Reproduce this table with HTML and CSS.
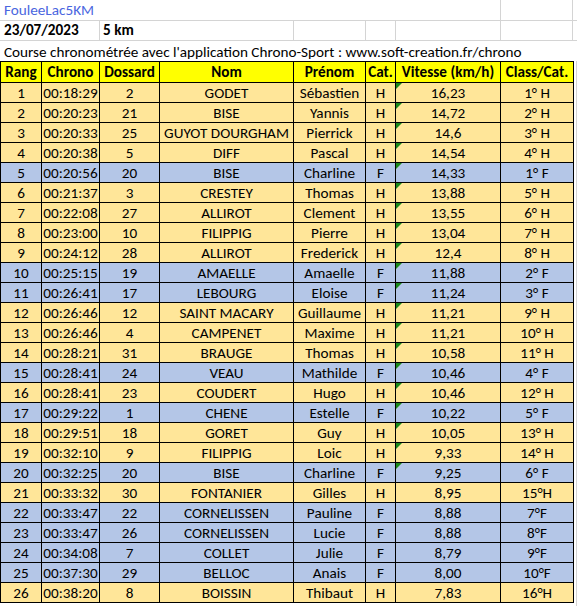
FILE: index.html
```html
<!DOCTYPE html>
<html lang="fr">
<head>
<meta charset="utf-8">
<title>FouleeLac5KM</title>
<link rel="stylesheet" href="styles.css">
</head>
<body>
<div class="sheet">
  <div class="line l1">
    <div class="cell w-a-f title">FouleeLac5KM</div>
    <div class="cell w-h"></div>
    <div class="cell rest"></div>
  </div>
  <div class="line l2">
    <div class="cell w-ab bold">23/07/2023</div>
    <div class="cell w-cd bold">5 km</div>
    <div class="cell w-e"></div>
    <div class="cell w-f"></div>
    <div class="cell w-g"></div>
    <div class="cell w-h"></div>
    <div class="cell rest"></div>
  </div>
  <div class="line l3">
    <div class="cell full">Course chronométrée avec l'application Chrono-Sport : www.soft-creation.fr/chrono</div>
  </div>
  <div class="tablewrap">
    <table class="results">
      <colgroup>
        <col class="c-rang"><col class="c-chrono"><col class="c-dos"><col class="c-nom"><col class="c-pre"><col class="c-cat"><col class="c-vit"><col class="c-cls">
      </colgroup>
      <thead>
        <tr><th>Rang</th><th>Chrono</th><th>Dossard</th><th>Nom</th><th>Prénom</th><th>Cat.</th><th>Vitesse (km/h)</th><th>Class/Cat.</th></tr>
      </thead>
      <tbody>
        <tr class="h"><td>1</td><td>00:18:29</td><td>2</td><td>GODET</td><td>Sébastien</td><td>H</td><td class="t">16,23</td><td>1° H</td></tr>
        <tr class="h"><td>2</td><td>00:20:23</td><td>21</td><td>BISE</td><td>Yannis</td><td>H</td><td class="t">14,72</td><td>2° H</td></tr>
        <tr class="h"><td>3</td><td>00:20:33</td><td>25</td><td>GUYOT DOURGHAM</td><td>Pierrick</td><td>H</td><td class="t">14,6</td><td>3° H</td></tr>
        <tr class="h"><td>4</td><td>00:20:38</td><td>5</td><td>DIFF</td><td>Pascal</td><td>H</td><td class="t">14,54</td><td>4° H</td></tr>
        <tr class="f"><td>5</td><td>00:20:56</td><td>20</td><td>BISE</td><td>Charline</td><td>F</td><td class="t">14,33</td><td>1° F</td></tr>
        <tr class="h"><td>6</td><td>00:21:37</td><td>3</td><td>CRESTEY</td><td>Thomas</td><td>H</td><td class="t">13,88</td><td>5° H</td></tr>
        <tr class="h"><td>7</td><td>00:22:08</td><td>27</td><td>ALLIROT</td><td>Clement</td><td>H</td><td class="t">13,55</td><td>6° H</td></tr>
        <tr class="h"><td>8</td><td>00:23:00</td><td>10</td><td>FILIPPIG</td><td>Pierre</td><td>H</td><td class="t">13,04</td><td>7° H</td></tr>
        <tr class="h"><td>9</td><td>00:24:12</td><td>28</td><td>ALLIROT</td><td>Frederick</td><td>H</td><td class="t">12,4</td><td>8° H</td></tr>
        <tr class="f"><td>10</td><td>00:25:15</td><td>19</td><td>AMAELLE</td><td>Amaelle</td><td>F</td><td class="t">11,88</td><td>2° F</td></tr>
        <tr class="f"><td>11</td><td>00:26:41</td><td>17</td><td>LEBOURG</td><td>Eloise</td><td>F</td><td class="t">11,24</td><td>3° F</td></tr>
        <tr class="h"><td>12</td><td>00:26:46</td><td>12</td><td>SAINT MACARY</td><td>Guillaume</td><td>H</td><td class="t">11,21</td><td>9° H</td></tr>
        <tr class="h"><td>13</td><td>00:26:46</td><td>4</td><td>CAMPENET</td><td>Maxime</td><td>H</td><td class="t">11,21</td><td>10° H</td></tr>
        <tr class="h"><td>14</td><td>00:28:21</td><td>31</td><td>BRAUGE</td><td>Thomas</td><td>H</td><td class="t">10,58</td><td>11° H</td></tr>
        <tr class="f"><td>15</td><td>00:28:41</td><td>24</td><td>VEAU</td><td>Mathilde</td><td>F</td><td class="t">10,46</td><td>4° F</td></tr>
        <tr class="h"><td>16</td><td>00:28:41</td><td>23</td><td>COUDERT</td><td>Hugo</td><td>H</td><td class="t">10,46</td><td>12° H</td></tr>
        <tr class="f"><td>17</td><td>00:29:22</td><td>1</td><td>CHENE</td><td>Estelle</td><td>F</td><td class="t">10,22</td><td>5° F</td></tr>
        <tr class="h"><td>18</td><td>00:29:51</td><td>18</td><td>GORET</td><td>Guy</td><td>H</td><td class="t">10,05</td><td>13° H</td></tr>
        <tr class="h"><td>19</td><td>00:32:10</td><td>9</td><td>FILIPPIG</td><td>Loic</td><td>H</td><td class="t">9,33</td><td>14° H</td></tr>
        <tr class="f"><td>20</td><td>00:32:25</td><td>20</td><td>BISE</td><td>Charline</td><td>F</td><td class="t">9,25</td><td>6° F</td></tr>
        <tr class="h"><td>21</td><td>00:33:32</td><td>30</td><td>FONTANIER</td><td>Gilles</td><td>H</td><td>8,95</td><td>15°H</td></tr>
        <tr class="f"><td>22</td><td>00:33:47</td><td>22</td><td>CORNELISSEN</td><td>Pauline</td><td>F</td><td>8,88</td><td>7°F</td></tr>
        <tr class="f"><td>23</td><td>00:33:47</td><td>26</td><td>CORNELISSEN</td><td>Lucie</td><td>F</td><td>8,88</td><td>8°F</td></tr>
        <tr class="f"><td>24</td><td>00:34:08</td><td>7</td><td>COLLET</td><td>Julie</td><td>F</td><td>8,79</td><td>9°F</td></tr>
        <tr class="f"><td>25</td><td>00:37:30</td><td>29</td><td>BELLOC</td><td>Anais</td><td>F</td><td>8,00</td><td>10°F</td></tr>
        <tr class="h"><td>26</td><td>00:38:20</td><td>8</td><td>BOISSIN</td><td>Thibaut</td><td>H</td><td>7,83</td><td>16°H</td></tr>
      </tbody>
    </table>
    <div class="filler"></div>
  </div>
</div>
</body>
</html>
```

FILE: styles.css
```css
html, body {
  margin: 0;
  padding: 0;
  background: #ffffff;
}

body {
  font-family: Carlito, Lato, "Liberation Sans", sans-serif;
  font-size: 15.2px;
  color: #000000;
}

.sheet {
  width: 577px;
  height: 606px;
  overflow: hidden;
}

.line {
  display: flex;
  box-sizing: border-box;
}

.l1 {
  height: 21px;
  border-bottom: 1px solid #d4d4d4;
}

.l2 {
  height: 20px;
  border-bottom: 1px solid #d4d4d4;
}

.l3 {
  height: 20px;
}

.cell {
  box-sizing: border-box;
  height: 100%;
  border-right: 1px solid #d4d4d4;
  padding-left: 4px;
  line-height: 20px;
  white-space: nowrap;
}

.l2 .cell {
  line-height: 19px;
}

.w-a-f { width: 501px; }
.w-ab { width: 100px; }
.w-cd { width: 194px; padding-left: 3px; }
.w-e { width: 72px; }
.w-f { width: 30px; }
.w-g { width: 105px; }
.w-h { width: 72px; }
.rest { flex: 1; border-right: none; }
.full { flex: 1; border-right: none; padding-top: 1px; }

.title {
  color: #4a66e0;
}

.bold {
  font-weight: bold;
}

.tablewrap {
  display: flex;
  align-items: flex-start;
}

.filler {
  flex: 1;
  align-self: stretch;
  border-right: 1px solid #d4d4d4;
  height: 546px;
}

.results {
  border-collapse: collapse;
  table-layout: fixed;
  width: 573px;
}

.c-rang { width: 41px; }
.c-chrono { width: 58px; }
.c-dos { width: 60px; }
.c-nom { width: 134px; }
.c-pre { width: 72px; }
.c-cat { width: 30px; }
.c-vit { width: 105px; }
.c-cls { width: 73px; }

.results th,
.results td {
  border: 1px solid #000000;
  padding: 0;
  text-align: center;
  white-space: nowrap;
  overflow: hidden;
  line-height: 18px;
}

.results thead tr {
  height: 21px;
}

.results th {
  background: #ffff00;
  font-weight: bold;
}

.results tbody tr {
  height: 20px;
}

.results tr.h td {
  background: #ffe699;
}

.results tr.f td {
  background: #b4c6e7;
}

.results td.t {
  position: relative;
}

.results td.t::before {
  content: "";
  position: absolute;
  top: 0;
  left: 0;
  border-top: 6px solid #1a8a1a;
  border-right: 6px solid transparent;
}
```
